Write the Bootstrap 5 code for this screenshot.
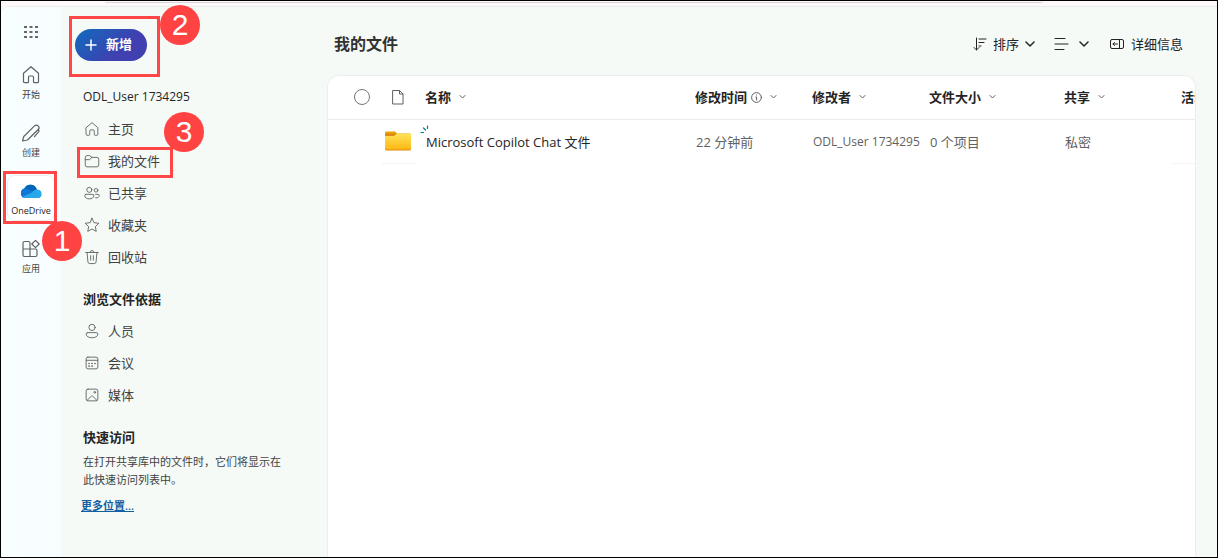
<!DOCTYPE html>
<html lang="zh-CN">
<head>
<meta charset="utf-8">
<meta name="viewport" content="width=device-width, initial-scale=1">
<title>我的文件 - OneDrive</title>
<link href="https://cdn.jsdelivr.net/npm/bootstrap@5.3.0/dist/css/bootstrap.min.css" rel="stylesheet">
<style>
body{font-family:"Open Sans","Noto Sans CJK SC",sans-serif;font-size:13px;line-height:20px;color:#242424;background:#fff}
svg{display:block;flex:none;fill:none;stroke:currentColor;stroke-linecap:round;stroke-linejoin:round}
.shell{border:1px solid #000;background:#fdf9fb;overflow:hidden}
.tabline{height:2px;width:calc(100% - 278px);margin-left:104px;border-bottom:1px solid #d9d5d8;border-radius:0 0 6px 6px}
.workspace{margin-top:3px;border-top:1px solid #ebebeb;background:#f5faf7;border-top-left-radius:8px}
.rail{width:60px;background:linear-gradient(90deg,#f7ffff,#f8fdff);font-size:9px;line-height:12px;color:#424242;padding-top:18px;border-top-left-radius:8px}
.rail button,.rail a{color:#424242;line-height:12px}
.rail a svg{color:#616161}
.rail-item{width:48px;height:46px;padding-top:6px;gap:4px;margin-bottom:12px;border-radius:8px}
.rail-item.current{background:#fff;border:1px solid #ececec;color:#242424;padding-top:5px}
.waffle{margin-bottom:20px}
.side{width:265px;padding:22px 0 0 14px}
.btn-new{height:32px;width:72px;border-radius:16px;padding:0 0 0 8px;gap:7px;color:#fff!important;font-size:13px;font-weight:700;background:linear-gradient(135deg,#0f6cbd,#4040b0 65%)!important;border:0}
.account{margin:26px 8px 6px;font-size:12px}
.side-list a{height:32px;padding-left:8px;gap:7px;color:#424242}
.side-list a svg{color:#616161}
.side h2{font-size:13px;line-height:20px;font-weight:700;margin:16px 8px 6px}
.tip{font-size:11px;line-height:18px;color:#424242;margin:0 8px 6px;width:202px}
.more{font-size:11px;line-height:18px;font-weight:600;color:#115ea3;margin-left:6px;margin-top:-1px}
.main-area{padding:26px 21px 0 1px;min-width:0}
.main-area h1{font-size:16px;line-height:22px;font-weight:700;color:#323130;margin:0 0 0 7px}
.tools{gap:16px;margin-right:13px}
.tools button{font-size:13px;line-height:20px;color:#242424;gap:6px}
.panel{margin-top:20px;border:1px solid #ededed;border-bottom:0;border-radius:12px 12px 0 0;background:#fff}
.files{table-layout:fixed;width:100%}
.files th,.files td{height:44px;padding:0 0 0 8px;vertical-align:middle;white-space:nowrap;overflow:hidden}
.files th{height:43px;font-weight:700}
.files thead{border-bottom:1px solid #ebebeb}
.files th svg{color:#616161}
.files td{color:#616161;padding:2px 0 0 9px}
.files td.file-name{color:#242424;overflow:visible}
.files td.file-by{font-size:12px}
.files td.ruled{border-bottom:1px solid #f3f3f3}
.c-pick{width:54px}.c-type{width:35px}.c-date,.c-by,.c-share{width:117px}.c-size{width:135px}.c-act{width:22px}
.pick{width:16px;height:16px;margin:0;border-color:#757575;border-radius:50%!important}
.files th.pick-cell{padding-left:26px}
.files th.type-cell{padding-left:10px}
.files td.icon-cell{padding:0 0 0 2px;overflow:visible}
.files .spark{left:-6px;top:-8px;color:#038387}
.callout{position:absolute;border:3px solid #ff4747;pointer-events:none;z-index:2}
.bubble{position:absolute;width:40px;height:40px;border-radius:50%;background:#ff4343;color:#fff;font:30px/40px "Liberation Sans",sans-serif;text-align:center;z-index:3;pointer-events:none}
.callout-1{inset:-5px -3px -4px -5px}.bubble-1{left:34px;top:45px}
.callout-2{inset:-13px -13px -16px -6px}.bubble-2{left:85px;top:-24px}
.callout-3{top:2px;left:2px;width:96px;height:31px}.bubble-3{left:89px;top:-33px}
</style>
</head>
<body>
<div class="shell min-vh-100 d-flex flex-column">
 <div class="tabline"></div>
 <div class="workspace d-flex flex-grow-1">
  <nav class="rail d-flex flex-column align-items-center flex-shrink-0" aria-label="应用栏">
   <button class="btn p-0 border-0 waffle" aria-label="应用启动器"><svg width="14" height="14" viewBox="0 0 14 14"><path stroke="none" fill="#666" d="M0 1h3v2H0zM5.500 1h3v2h-3zM11 1h3v2h-3zM0 6h3v2H0zM5.500 6h3v2h-3zM11 6h3v2h-3zM0 11h3v2H0zM5.500 11h3v2h-3zM11 11h3v2h-3z"/></svg></button>
   <a href="#" class="rail-item d-flex flex-column align-items-center text-decoration-none"><svg width="20" height="20" viewBox="0 0 20 20" stroke-width="1.200"><path d="M2.500 8.200 10 1.700l7.500 6.500v8.500a1 1 0 0 1-1 1h-3a1 1 0 0 1-1-1V12a1 1 0 0 0-1-1h-3a1 1 0 0 0-1 1v4.700a1 1 0 0 1-1 1h-3a1 1 0 0 1-1-1z"/></svg>开始</a>
   <a href="#" class="rail-item d-flex flex-column align-items-center text-decoration-none"><svg width="20" height="20" viewBox="0 0 20 20" stroke-width="1.200"><path d="m1.500 18 1.300-4.500L13.500 2.800a2.600 2.600 0 0 1 3.700 3.700L6.500 17zM10.500 13l3.200-3.200 2.600-2.400c1.200-.9 2.200.2 1.500 1.300l-4.300 5"/></svg>创建</a>
   <a href="#" class="rail-item current position-relative d-flex flex-column align-items-center text-decoration-none" aria-current="page"><svg width="22" height="20" viewBox="0 0 22 20" stroke="none"><path fill="#1490df" stroke="none" d="M5 17a5 5 0 0 1-1-9.500A7 7 0 0 1 17 9a4 4 0 0 1 .5 8z"/><path fill="#0364b8" stroke="none" d="M4.500 8A6.500 6.500 0 0 1 16.800 8.500L11 11z"/><path fill="#0f78d4" stroke="none" d="M4.700 7.500c2-.3 4 .3 9.300 4L4 17A5 5 0 0 1 4.700 7.500"/><path fill="#28a8ea" stroke="none" d="M16.500 8.600A4.300 4.300 0 0 1 21.500 13a4 4 0 0 1-4 4H5a5 5 0 0 1-3-1l9-4c2-1 3-3 5.500-3.400"/></svg>OneDrive<span class="callout callout-1"></span><span class="bubble bubble-1">1</span></a>
   <a href="#" class="rail-item d-flex flex-column align-items-center text-decoration-none"><svg width="20" height="20" viewBox="0 0 20 20" stroke-width="1.200"><path d="M9 10H2V4a1.500 1.500 0 0 1 1.500-1.500h4A1.500 1.500 0 0 1 9 4v12.500M2 10v6a1.500 1.500 0 0 0 1.500 1.500h11A1.500 1.500 0 0 0 16 16v-4.500a1.500 1.500 0 0 0-1.500-1.500H9v7.500M14.500 1.300l3.700 3.700-3.700 3.700L10.800 5z"/></svg>应用</a>
  </nav>
  <aside class="side flex-shrink-0">
   <div class="position-relative d-inline-block align-top"><button class="btn btn-new d-flex align-items-center"><svg width="16" height="16" viewBox="0 0 16 16" stroke-width="1.500"><path d="M8 3v10M3 8h10"/></svg>新增</button><span class="callout callout-2"></span><span class="bubble bubble-2">2</span></div>
   <div class="account">ODL_User 1734295</div>
   <ul class="side-list list-unstyled m-0">
    <li><a href="#" class="d-flex align-items-center text-decoration-none"><svg width="18" height="18" viewBox="0 0 20 20"><path d="M3.500 8.500 10 3l6.500 5.500v7.500a1 1 0 0 1-1 1h-2a1 1 0 0 1-1-1v-4a1 1 0 0 0-1-1h-3a1 1 0 0 0-1 1v4a1 1 0 0 1-1 1h-2a1 1 0 0 1-1-1z"/></svg>主页</a></li>
    <li class="position-relative"><a href="#" class="d-flex align-items-center text-decoration-none"><svg width="18" height="18" viewBox="0 0 20 20"><path d="M2.500 6a2 2 0 0 1 2-2h3L10 6h5.500a2 2 0 0 1 2 2v6.500a2 2 0 0 1-2 2h-11a2 2 0 0 1-2-2zM2.500 8.500h4.700L10 6"/></svg>我的文件</a><span class="callout callout-3"></span><span class="bubble bubble-3">3</span></li>
    <li><a href="#" class="d-flex align-items-center text-decoration-none"><svg width="18" height="18" viewBox="0 0 20 20"><circle cx="7" cy="6.500" r="2.800"/><circle cx="14.500" cy="7" r="2"/><path d="M3 11.500h8a1 1 0 0 1 1 1c0 3-2.200 4-5 4s-5-1-5-4a1 1 0 0 1 1-1M14 11.500h3a1 1 0 0 1 1 1c0 2.200-1.600 3.200-4 2.900"/></svg>已共享</a></li>
    <li><a href="#" class="d-flex align-items-center text-decoration-none"><svg width="18" height="18" viewBox="0 0 20 20"><path d="m10 2.500 2.300 4.900 5.300.7-3.900 3.700 1 5.300L10 14.500l-4.700 2.600 1-5.300-3.900-3.700 5.300-.7z"/></svg>收藏夹</a></li>
    <li><a href="#" class="d-flex align-items-center text-decoration-none"><svg width="18" height="18" viewBox="0 0 20 20"><path d="M3 5h14M8 4.800a2 2 0 0 1 4 0M4.500 5l1 10.500a2 2 0 0 0 2 1.800h5a2 2 0 0 0 2-1.800l1-10.500M8.500 8.500v5M11.500 8.500v5"/></svg>回收站</a></li>
   </ul>
   <h2>浏览文件依据</h2>
   <ul class="side-list list-unstyled m-0">
    <li><a href="#" class="d-flex align-items-center text-decoration-none"><svg width="18" height="18" viewBox="0 0 20 20"><circle cx="10" cy="6" r="3.500"/><path d="M5 11.800h10a1.500 1.500 0 0 1 1.500 1.500c0 2.800-3 4.200-6.500 4.200s-6.500-1.400-6.500-4.200A1.500 1.500 0 0 1 5 11.800"/></svg>人员</a></li>
    <li><a href="#" class="d-flex align-items-center text-decoration-none"><svg width="18" height="18" viewBox="0 0 20 20"><rect x="3.500" y="3.500" width="13" height="13" rx="2"/><path d="M3.500 7h13"/><path stroke-width="1.800" d="M6.700 10.500h.1M10 10.500h.1M13.300 10.500h.1M6.700 13.500h.1M10 13.500h.1"/></svg>会议</a></li>
    <li><a href="#" class="d-flex align-items-center text-decoration-none"><svg width="18" height="18" viewBox="0 0 20 20"><rect x="3.500" y="3.500" width="13" height="13" rx="2"/><path d="m4.500 16 4.800-4.700a1 1 0 0 1 1.400 0l4.800 4.700"/><circle cx="13" cy="7" r="1"/></svg>媒体</a></li>
   </ul>
   <h2>快速访问</h2>
   <p class="tip">在打开共享库中的文件时，它们将显示在此快速访问列表中。</p>
   <a href="#" class="more d-inline-block">更多位置...</a>
  </aside>
  <main class="main-area flex-grow-1 d-flex flex-column">
   <header class="d-flex align-items-center">
    <h1>我的文件</h1>
    <div class="tools d-flex ms-auto">
     <button class="btn p-0 border-0 d-flex align-items-center"><svg width="14" height="14" viewBox="0 0 14 14"><path d="M3.500 1v12M1 10.500 3.500 13 6 10.500M6 2h7M6 5.500h5M6 9h2"/></svg>排序<svg class="ms-n1" width="10" height="10" viewBox="0 0 10 10" stroke-width="1.500"><path d="m1 3 4 4 4-4"/></svg></button>
     <button class="btn p-0 border-0 d-flex align-items-center" aria-label="视图"><svg width="18" height="16" viewBox="0 0 18 16"><path d="M4 2.500h10M4 8h13M4 13.500h9"/></svg><svg class="ms-1" width="10" height="10" viewBox="0 0 10 10" stroke-width="1.500"><path d="m1 3 4 4 4-4"/></svg></button>
     <button class="btn p-0 border-0 d-flex align-items-center ms-1"><svg width="16" height="16" viewBox="0 0 16 16"><rect x="1.500" y="3.500" width="13" height="9" rx="1.500"/><path d="M10.500 3.500v9M4 8h4.500M5.500 6.500 4 8l1.500 1.500"/></svg>详细信息</button>
    </div>
   </header>
   <section class="panel flex-grow-1 overflow-hidden">
    <table class="files">
     <colgroup><col class="c-pick"><col class="c-type"><col><col class="c-date"><col class="c-by"><col class="c-size"><col class="c-share"><col class="c-act"></colgroup>
     <thead><tr>
      <th class="pick-cell"><input type="checkbox" class="form-check-input pick d-block" aria-label="全选"></th>
      <th class="type-cell"><svg width="12" height="15" viewBox="0 0 12 15"><path d="M1 .500h6.500L11 4v10H1zM7.500.500V4H11"/></svg></th>
      <th scope="col"><span class="d-flex align-items-center gap-2">名称<svg width="7" height="6" viewBox="0 0 7 6"><path d="m1 1.500 2.500 2.500L6 1.500"/></svg></span></th>
      <th scope="col"><span class="d-flex align-items-center gap-2"><span class="d-flex align-items-center">修改时间<svg class="ms-1" width="11" height="11" viewBox="0 0 11 11"><circle cx="5.500" cy="5.500" r="4.900"/><path d="M4.800 5h.8v3M5.500 3v.1"/></svg></span><svg width="7" height="6" viewBox="0 0 7 6"><path d="m1 1.500 2.500 2.500L6 1.500"/></svg></span></th>
      <th scope="col"><span class="d-flex align-items-center gap-2">修改者<svg width="7" height="6" viewBox="0 0 7 6"><path d="m1 1.500 2.500 2.500L6 1.500"/></svg></span></th>
      <th scope="col"><span class="d-flex align-items-center gap-2">文件大小<svg width="7" height="6" viewBox="0 0 7 6"><path d="m1 1.500 2.500 2.500L6 1.500"/></svg></span></th>
      <th scope="col"><span class="d-flex align-items-center gap-2">共享<svg width="7" height="6" viewBox="0 0 7 6"><path d="m1 1.500 2.500 2.500L6 1.500"/></svg></span></th>
      <th scope="col">活动</th>
     </tr></thead>
     <tbody><tr>
      <td></td>
      <td class="icon-cell ruled"><svg width="28" height="22" viewBox="0 0 28 22"><defs><linearGradient id="fold" x2="0" y2="1"><stop stop-color="#ffe35a"/><stop offset="1" stop-color="#fdb813"/></linearGradient></defs><path fill="#e8a400" stroke="none" d="M1 3a1.500 1.500 0 0 1 1.500-1.500H11L13.500 4v5H1z"/><rect x="1" y="3.500" width="26" height="17" rx="1.500" fill="#de8a10" stroke="none"/><path fill="url(#fold)" stroke="none" d="M1 6h9l3-2.500h12.500A1.500 1.500 0 0 1 27 5v13.200a1.300 1.300 0 0 1-1.300 1.300H2.300A1.300 1.300 0 0 1 1 18.200z"/></svg></td>
      <td class="file-name"><span class="position-relative">Microsoft Copilot Chat 文件<svg class="spark position-absolute" width="9" height="9" viewBox="0 0 9 9" stroke-width="1.200"><path d="M1 7.500h2.500M3.500 3l2 2M7.500 1v2.500"/></svg></span></td>
      <td>22 分钟前</td><td class="file-by">ODL_User 1734295</td><td>0 个项目</td><td>私密</td><td class="ruled"></td>
     </tr></tbody>
    </table>
   </section>
  </main>
 </div>
</div>
<script src="https://cdn.jsdelivr.net/npm/bootstrap@5.3.0/dist/js/bootstrap.bundle.min.js"></script>
</body>
</html>
